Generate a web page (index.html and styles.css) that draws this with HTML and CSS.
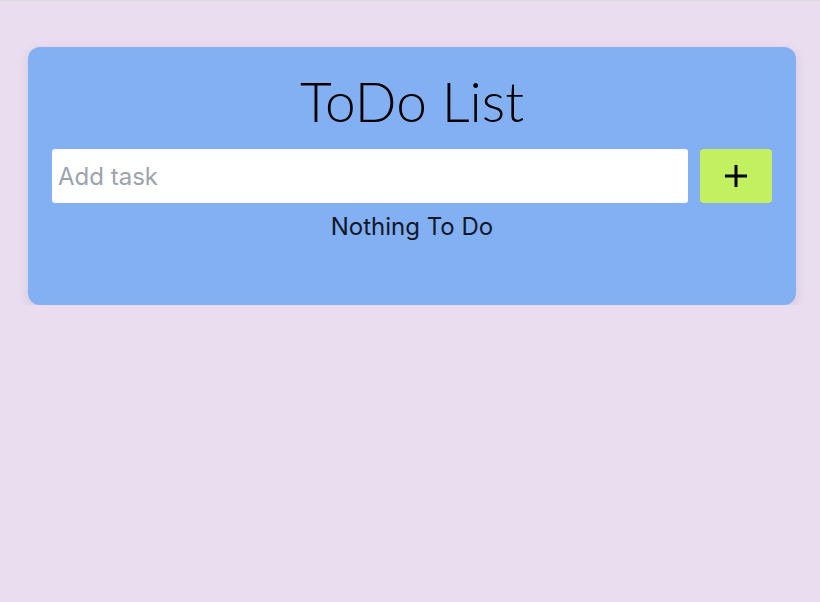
FILE: index.html
```html
<!DOCTYPE html>
<html>
<head>
<meta charset="utf-8">
<link rel="stylesheet" href="styles.css">
</head>
<body>
<div class="topline"></div>
<main class="page">
  <section class="card">
    <h1 class="title">ToDo List</h1>
    <form class="add-row">
      <input class="task-input" type="text" placeholder="Add task">
      <button class="add-btn" type="button" aria-label="Add">
        <svg width="24" height="24" viewBox="0 0 24 24"><path d="M12 1v22M1 12h22" stroke="#000" stroke-width="3" fill="none"/></svg>
      </button>
    </form>
    <p class="empty">Nothing To Do</p>
  </section>
</main>
</body>
</html>
```
FILE: styles.css
```css
html, body {
  margin: 0;
  padding: 0;
  background: #e9ddef;
}
body {
  font-family: Inter, "Noto Sans", sans-serif;
}
.topline {
  height: 1px;
  background: #dedbe0;
}
.page {
  padding: 46px 0 0 28px;
}
.card {
  width: 768px;
  box-sizing: border-box;
  background: #83b0f3;
  border-radius: 12px;
  padding: 19px 24px 62px;
  box-shadow: 0 4px 12px rgba(60, 40, 90, 0.12);
}
.title {
  margin: 0 0 13px;
  text-align: center;
  font-family: Lato, sans-serif;
  font-weight: 300;
  font-size: 55px;
  line-height: 70px;
  color: #000;
}
.add-row {
  display: flex;
  gap: 12px;
  margin: 0;
}
.task-input {
  flex: 1;
  height: 54px;
  box-sizing: border-box;
  border: none;
  border-radius: 3px;
  background: #fff;
  padding: 0 6px;
  font-family: Inter, sans-serif;
  font-size: 24px;
  color: #111;
  outline: none;
}
.task-input::placeholder {
  color: #9ca3af;
}
.add-btn {
  width: 72px;
  height: 54px;
  border: none;
  border-radius: 4px;
  background: #c2f060;
  display: flex;
  align-items: center;
  justify-content: center;
  padding: 0;
}
.empty {
  margin: 8px 0 0;
  text-align: center;
  font-size: 24px;
  line-height: 32px;
  color: #111827;
}
```
